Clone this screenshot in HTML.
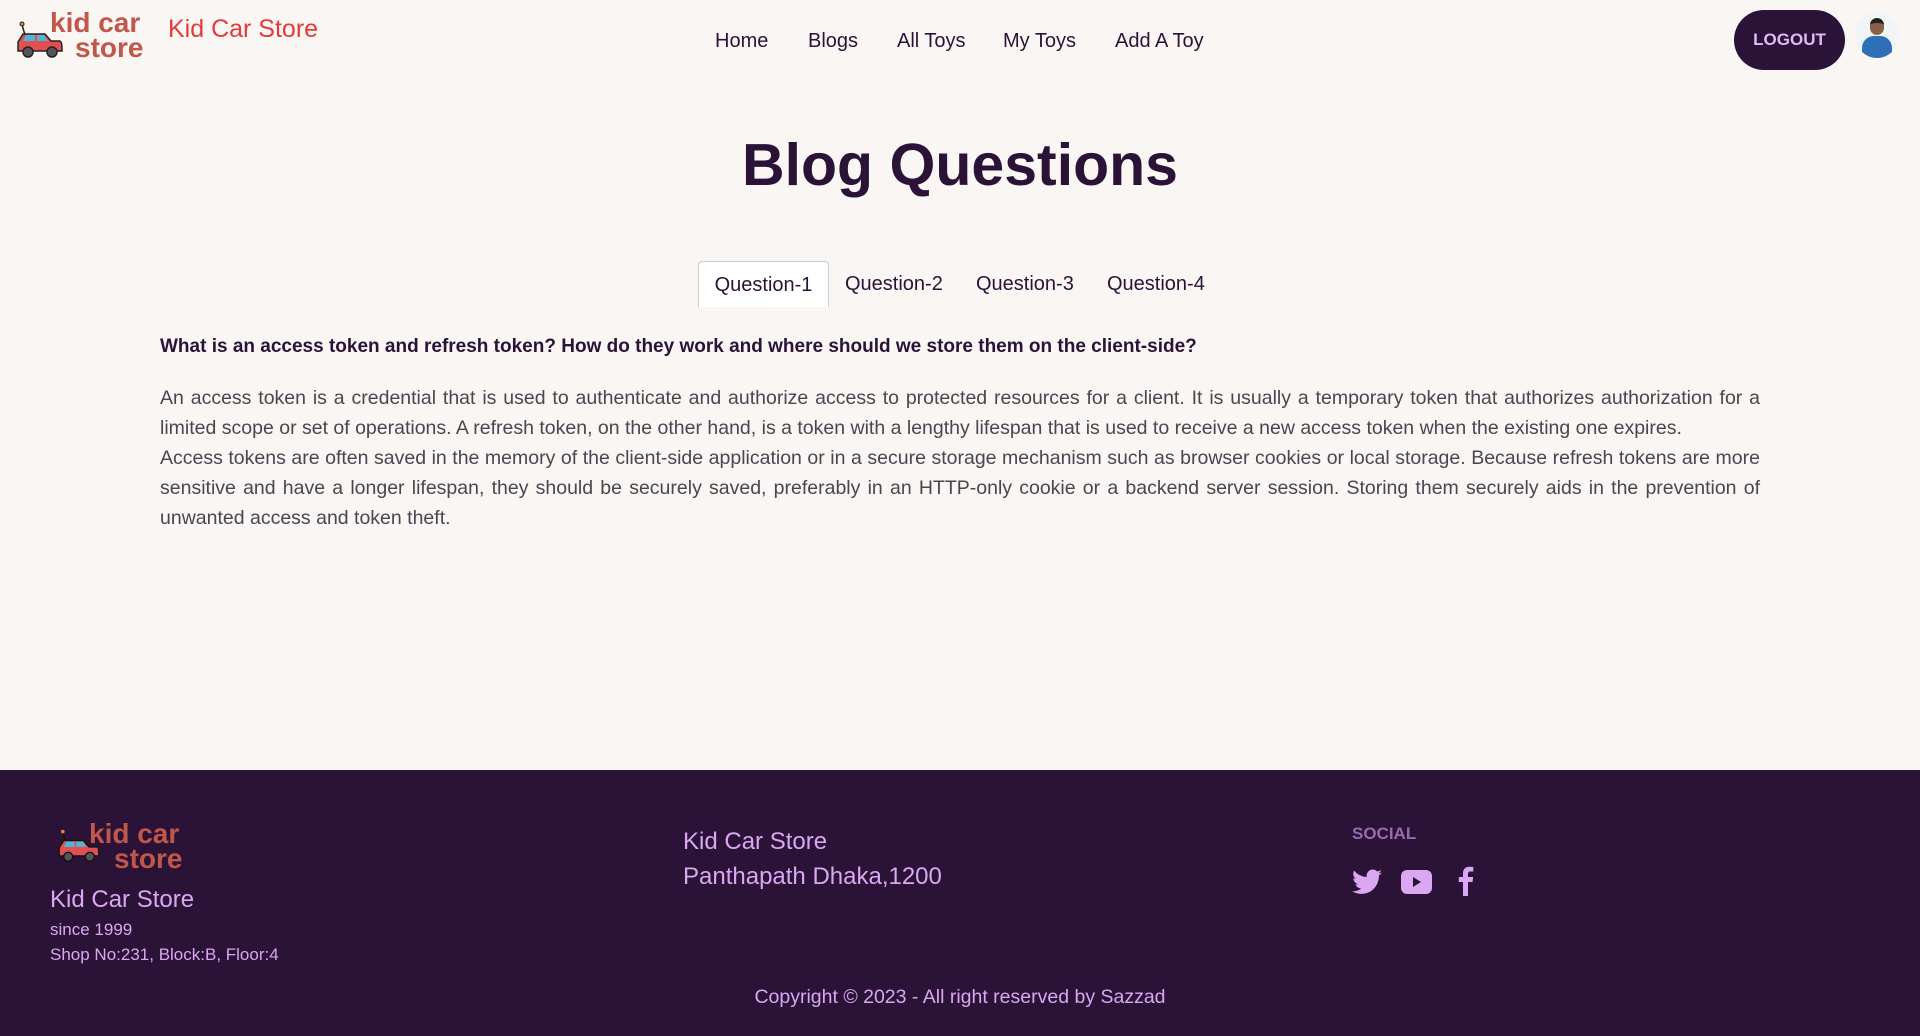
<!DOCTYPE html>
<html><head><meta charset="utf-8"><style>
*{margin:0;padding:0;box-sizing:border-box}
body{width:1920px;height:1036px;background:#faf6f4;font-family:"Liberation Sans",sans-serif;position:relative;overflow:hidden;color:#2a1336}
.abs{position:absolute;white-space:nowrap}
.nav a{position:absolute;top:30px;font-size:20px;color:#2a1336;text-decoration:none}
.logo{position:absolute;font-weight:bold;color:#c0574a;line-height:0.9}
.tab{position:absolute;top:261px;height:46px;font-size:20px;line-height:46px;color:#2a1336}
p{position:absolute;left:160px;width:1600px;font-size:19.5px;line-height:30px;color:#4a4550;text-align:justify}
footer{position:absolute;left:0;top:770px;width:1920px;height:266px;background:#2a1336;color:#dba6f2}
</style></head><body>
<svg class="abs" style="left:15px;top:20px" width="50" height="40" viewBox="0 0 50 40">
<line x1="7" y1="5" x2="11" y2="18" stroke="#222" stroke-width="1.5"/><circle cx="7" cy="4" r="2" fill="#e8862a" stroke="#222"/>
<path d="M3 22 L8 14 H30 L36 21 H45 Q47 22 47 28 V31 H3 Z" fill="#e05050" stroke="#222" stroke-width="1.5"/>
<path d="M11 15 H20 V21 H8 Z" fill="#4cb8d8"/><path d="M22 15 H29 L33 21 H22 Z" fill="#4cb8d8"/>
<circle cx="13" cy="32" r="5" fill="#555" stroke="#222" stroke-width="1.5"/><circle cx="37" cy="32" r="5" fill="#555" stroke="#222" stroke-width="1.5"/></svg>
<div class="logo" style="left:50px;top:10px;font-size:28px">kid car<br><span style="margin-left:25px">store</span></div>
<div class="abs" style="left:168px;top:15px;font-size:25px;color:#e53a3a">Kid Car Store</div>
<div class="nav"><a style="left:715px">Home</a><a style="left:808px">Blogs</a><a style="left:897px">All Toys</a><a style="left:1003px">My Toys</a><a style="left:1115px">Add A Toy</a></div>
<div class="abs" style="left:1734px;top:10px;width:111px;height:60px;border-radius:30px;background:#2a1336;color:#e2b8f5;font-size:17px;font-weight:bold;text-align:center;line-height:60px">LOGOUT</div>
<div class="abs" style="left:1855px;top:12px;width:44px;height:46px;border-radius:50%;background:#f2f5f8;overflow:hidden">
<div style="position:absolute;left:7px;top:24px;width:30px;height:26px;border-radius:12px 12px 0 0;background:#2f6fb8"></div>
<div style="position:absolute;left:15px;top:6px;width:14px;height:17px;border-radius:7px;background:#8a6048;border-top:5px solid #222"></div></div>
<div class="abs" style="left:0;width:1920px;text-align:center;top:131px;font-size:59px;font-weight:bold;color:#2a1336">Blog Questions</div>
<div class="tab" style="left:698px;width:131px;border:1px solid #ccc;border-bottom:none;border-radius:4px 4px 0 0;background:#fff;text-align:center">Question-1</div>
<div class="tab" style="left:845px">Question-2</div>
<div class="tab" style="left:976px">Question-3</div>
<div class="tab" style="left:1107px">Question-4</div>
<div class="abs" style="left:160px;top:336px;font-size:19px;font-weight:bold;color:#2a1336">What is an access token and refresh token? How do they work and where should we store them on the client-side?</div>
<p style="top:383px">An access token is a credential that is used to authenticate and authorize access to protected resources for a client. It is usually a temporary token that authorizes authorization for a limited scope or set of operations. A refresh token, on the other hand, is a token with a lengthy lifespan that is used to receive a new access token when the existing one expires.<br>Access tokens are often saved in the memory of the client-side application or in a secure storage mechanism such as browser cookies or local storage. Because refresh tokens are more sensitive and have a longer lifespan, they should be securely saved, preferably in an HTTP-only cookie or a backend server session. Storing them securely aids in the prevention of unwanted access and token theft.</p>
<footer>
<svg class="abs" style="left:55px;top:58px" width="48" height="36" viewBox="0 0 50 40">
<line x1="7" y1="5" x2="11" y2="18" stroke="#111" stroke-width="1.5"/><circle cx="7" cy="4" r="2" fill="#e8862a"/>
<path d="M3 22 L8 14 H30 L36 21 H45 Q47 22 47 28 V31 H3 Z" fill="#e05050" stroke="#111" stroke-width="1.5"/>
<path d="M11 15 H20 V21 H8 Z" fill="#4cb8d8"/><path d="M22 15 H29 L33 21 H22 Z" fill="#4cb8d8"/>
<circle cx="13" cy="32" r="5" fill="#555" stroke="#111" stroke-width="1.5"/><circle cx="37" cy="32" r="5" fill="#555" stroke="#111" stroke-width="1.5"/></svg>
<div class="logo" style="left:89px;top:51px;font-size:28px">kid car<br><span style="margin-left:25px">store</span></div>
<div class="abs" style="left:50px;top:116px;font-size:24px">Kid Car Store</div>
<div class="abs" style="left:50px;top:150px;font-size:17px">since 1999</div>
<div class="abs" style="left:50px;top:175px;font-size:17px">Shop No:231, Block:B, Floor:4</div>
<div class="abs" style="left:683px;top:54px;font-size:24px;line-height:35px">Kid Car Store<br>Panthapath Dhaka,1200</div>
<div class="abs" style="left:1352px;top:54px;font-size:17px;font-weight:bold;color:#9a6aae">SOCIAL</div>
<svg class="abs" style="left:1352px;top:99px" width="30" height="26" viewBox="0 0 24 20" fill="#dba6f2"><path d="M24 2.4a10 10 0 0 1-2.8.8A5 5 0 0 0 23.3.4a10 10 0 0 1-3.1 1.2A4.9 4.9 0 0 0 11.8 6 14 14 0 0 1 1.7.9a4.9 4.9 0 0 0 1.5 6.6A4.9 4.9 0 0 1 1 6.9a4.9 4.9 0 0 0 3.9 4.8 5 5 0 0 1-2.2.1 4.9 4.9 0 0 0 4.6 3.4A9.9 9.9 0 0 1 0 17.3 14 14 0 0 0 7.5 19.5c9 0 14-7.5 14-14v-.6A10 10 0 0 0 24 2.4z"/></svg>
<svg class="abs" style="left:1401px;top:100px" width="31" height="24" viewBox="0 0 31 24"><rect width="31" height="24" rx="6" fill="#dba6f2"/><path d="M12 7 L20 12 L12 17 Z" fill="#2a1336"/></svg>
<svg class="abs" style="left:1458px;top:96px" width="16" height="30" viewBox="0 0 16 30" fill="#dba6f2"><path d="M10 30V16h4.5l.7-5H10V8c0-1.5.5-2.5 2.6-2.5H15.3V1A37 37 0 0 0 11.4.8C7.6.8 5 3 5 7.3V11H.8v5H5v14z"/></svg>
<div class="abs" style="left:0;width:1920px;text-align:center;top:216px;font-size:19.5px">Copyright © 2023 - All right reserved by Sazzad</div>
</footer>
</body></html>
